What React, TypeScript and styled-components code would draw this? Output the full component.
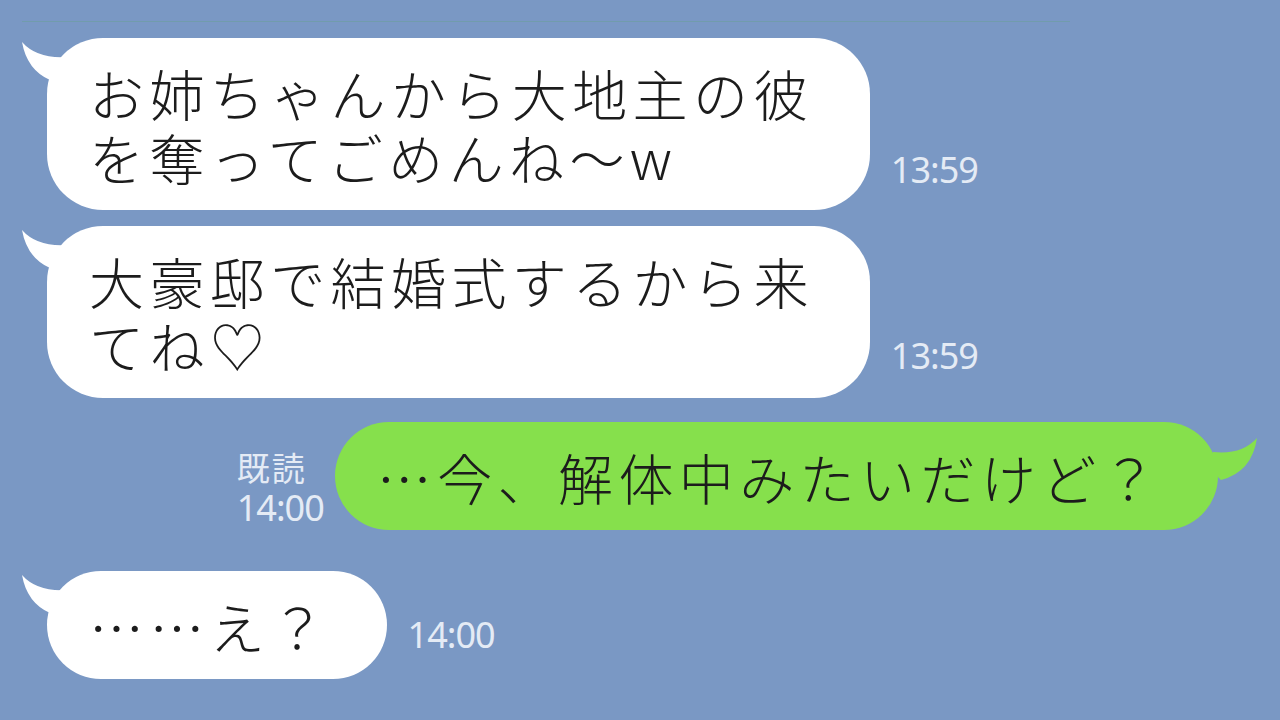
import React from "react";
import styled, { createGlobalStyle } from "styled-components";

const GlobalStyle = createGlobalStyle`
  html, body {
    margin: 0;
    padding: 0;
    background: #7a98c4;
  }
  body {
    width: 1280px;
    height: 720px;
    overflow: hidden;
  }
`;

const Screen = styled.div`
  width: 1280px;
  height: 720px;
  box-sizing: border-box;
  padding: 21px 62px 0 47px;
  display: flex;
  flex-direction: column;
  background: #7a98c4;
  font-family: "Noto Sans CJK JP", "Noto Sans", sans-serif;
`;

const Divider = styled.div`
  width: 1048px;
  height: 1px;
  margin-left: -25px;
  background: #6f9ea6;
  opacity: 0.8;
`;

const Row = styled.div<{ $mine?: boolean; $top: number }>`
  display: flex;
  align-items: flex-end;
  justify-content: ${(p) => (p.$mine ? "flex-end" : "flex-start")};
  gap: ${(p) => (p.$mine ? 11 : 21)}px;
  margin-top: ${(p) => p.$top}px;
`;

const Bubble = styled.div<{ $mine?: boolean }>`
  position: relative;
  padding: 22px 56px 22px 42px;
  border-radius: 56px;
  background: ${(p) => (p.$mine ? "#86e04c" : "#ffffff")};
  color: #1c1c1c;
  font-size: 55px;
  font-weight: 300;
  line-height: 64px;
  letter-spacing: 5.4px;
  white-space: pre;
`;

const Tail = styled.svg<{ $mine?: boolean }>`
  position: absolute;
  top: 0;
  ${(p) => (p.$mine ? "right: -40px;" : "left: -26px;")}
  width: ${(p) => (p.$mine ? 50 : 60)}px;
  height: 70px;
  overflow: visible;
`;

const Meta = styled.div<{ $lift: number }>`
  display: flex;
  flex-direction: column;
  align-items: flex-start;
  gap: 6px;
  margin-bottom: ${(p) => p.$lift}px;
  color: #e4ebf5;
`;

const ReadMark = styled.span`
  font-family: "Noto Sans CJK JP", sans-serif;
  font-size: 33px;
  line-height: 34px;
  letter-spacing: 2px;
`;

const Time = styled.span`
  font-family: "Noto Sans", sans-serif;
  font-size: 36px;
  line-height: 35px;
  letter-spacing: -1px;
`;

function Message({
  text,
  time,
  mine,
  read,
  top,
  lift,
}: {
  text: string;
  time: string;
  mine?: boolean;
  read?: boolean;
  top: number;
  lift: number;
}) {
  const meta = (
    <Meta $lift={lift}>
      {read && <ReadMark>既読</ReadMark>}
      <Time>{time}</Time>
    </Meta>
  );
  return (
    <Row $mine={mine} $top={top}>
      {mine && meta}
      <Bubble $mine={mine}>
        {mine ? (
          <Tail $mine viewBox="0 0 50 70">
            <path d="M49 16 Q34 33 5 30 L0 45 L13 58 Q44 50 49 16 Z" fill="#86e04c" />
          </Tail>
        ) : (
          <Tail viewBox="0 0 60 70">
            <path d="M1 4 Q16 21 46 19 L50 45 L29 42 Q6 32 1 4 Z" fill="#ffffff" />
          </Tail>
        )}
        {text}
      </Bubble>
      {!mine && meta}
    </Row>
  );
}

export default function App() {
  return (
    <>
      <GlobalStyle />
      <Screen>
        <Divider />
        <Message top={16} lift={23} time="13:59" text={"お姉ちゃんから大地主の彼\nを奪ってごめんね〜w"} />
        <Message top={16} lift={25} time="13:59" text={"大豪邸で結婚式するから来\nてね♡"} />
        <Message mine read top={24} lift={5} time="14:00" text="…今、解体中みたいだけど？" />
        <Message top={41} lift={27} time="14:00" text="……え？" />
      </Screen>
    </>
  );
}
